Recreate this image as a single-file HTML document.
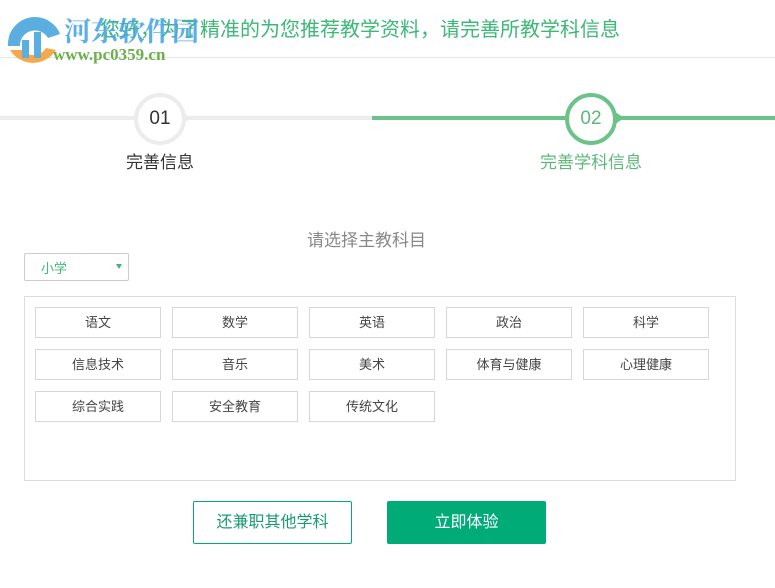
<!DOCTYPE html>
<html><head><meta charset="utf-8"><style>
body{margin:0;width:775px;height:588px;background:#fff;position:relative;overflow:hidden;font-family:"Liberation Sans","Noto Sans CJK SC",sans-serif}
.a{position:absolute}
.hd{left:100px;top:18px;font-size:20px;color:#3cb878;white-space:nowrap;line-height:24px}
.sub{border-top:1px solid #e8e8e8;left:0;top:57px;width:775px}
.circ{width:44px;height:44px;border-radius:50%;background:#fff;text-align:center;line-height:44px;font-size:19px}
.it{width:124px;height:29px;border:1px solid #d6d6d6;text-align:center;line-height:29px;font-size:13px;color:#444;background:#fff}
</style></head><body>
<div class="a hd">您好，为了精准的为您推荐教学资料，请完善所教学科信息</div>
<div class="a sub"></div>
<svg class="a" style="left:4px;top:10px" width="60" height="58" viewBox="0 0 60 58">
<path d="M4 36 A27 27 0 0 1 56 24 L44 28 A15 15 0 0 0 16 36Z" fill="#5aaee0"/>
<path d="M6 40 A27 27 0 0 0 52 40 L42 38 A15 15 0 0 1 18 40Z" fill="#f6a94b"/>
<rect x="18" y="30" width="7" height="18" fill="#5aaee0"/><rect x="30" y="22" width="7" height="26" fill="#5aaee0"/>
</svg>
<div class="a" style="left:64px;top:10px;font-size:27px;font-weight:bold;color:#4aa7e6;font-family:'Liberation Serif','Noto Serif CJK SC',serif;opacity:.9">河东软件园</div>
<div class="a" style="left:53px;top:45px;font-size:17px;font-weight:bold;color:#6ab04c;font-family:'Liberation Serif',serif">www.pc0359.cn</div>
<div class="a" style="left:0;top:116px;width:372px;height:4px;background:#ececec"></div>
<div class="a" style="left:372px;top:116px;width:403px;height:4px;background:#6cc38a"></div>
<div class="a circ" style="left:134px;top:93px;border:4px solid #ececec;color:#333">01</div>
<div class="a" style="left:183px;top:112px;width:0;height:0;border-left:8px solid #ececec;border-top:6px solid transparent;border-bottom:6px solid transparent"></div>
<div class="a circ" style="left:565px;top:93px;border:4px solid #6cc38a;color:#5cb87a">02</div>
<div class="a" style="left:614px;top:111px;width:0;height:0;border-left:10px solid #6cc38a;border-top:7px solid transparent;border-bottom:7px solid transparent"></div>
<div class="a" style="left:126px;top:148px;font-size:17px;color:#333">完善信息</div>
<div class="a" style="left:540px;top:148px;font-size:17px;color:#5cb87a">完善学科信息</div>
<div class="a" style="left:307px;top:226px;font-size:17px;color:#888">请选择主教科目</div>
<div class="a" style="left:24px;top:253px;width:103px;height:26px;border:1px solid #ccc;border-radius:2px"></div>
<div class="a" style="left:41px;top:258px;font-size:13px;color:#3cb878">小学</div>
<div class="a" style="left:116px;top:264px;width:0;height:0;border-top:5px solid #3cb878;border-left:3px solid transparent;border-right:3px solid transparent"></div>
<div class="a" style="left:24px;top:296px;width:710px;height:183px;border:1px solid #ddd"></div>
<div class="a it" style="left:35px;top:307px">语文</div>
<div class="a it" style="left:172px;top:307px">数学</div>
<div class="a it" style="left:309px;top:307px">英语</div>
<div class="a it" style="left:446px;top:307px">政治</div>
<div class="a it" style="left:583px;top:307px">科学</div>
<div class="a it" style="left:35px;top:349px">信息技术</div>
<div class="a it" style="left:172px;top:349px">音乐</div>
<div class="a it" style="left:309px;top:349px">美术</div>
<div class="a it" style="left:446px;top:349px">体育与健康</div>
<div class="a it" style="left:583px;top:349px">心理健康</div>
<div class="a it" style="left:35px;top:391px">综合实践</div>
<div class="a it" style="left:172px;top:391px">安全教育</div>
<div class="a it" style="left:309px;top:391px">传统文化</div>
<div class="a" style="left:193px;top:501px;width:157px;height:41px;border:1px solid #00ab78;border-radius:2px;text-align:center;line-height:41px;font-size:16px;color:#1a9a70">还兼职其他学科</div>
<div class="a" style="left:387px;top:501px;width:159px;height:43px;background:#00ab78;border-radius:2px;text-align:center;line-height:43px;font-size:16px;color:#fff">立即体验</div>
</body></html>
